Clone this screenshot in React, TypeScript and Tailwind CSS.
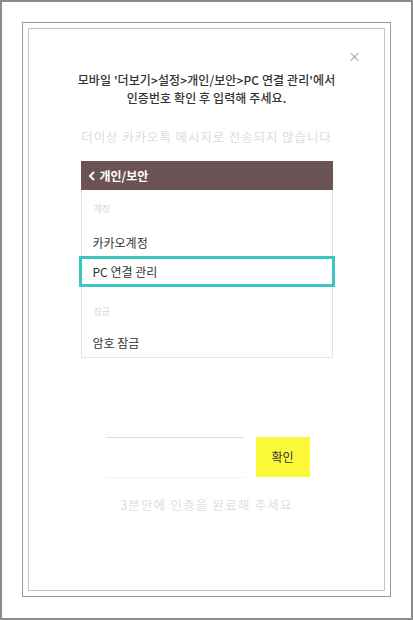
import React from "react";

export default function App() {
  const font = { fontFamily: '"Noto Sans CJK KR", "Noto Sans", sans-serif' };
  return (
    <div
      className="w-[413px] h-[620px] border-2 border-[#8c8c8c] bg-white pt-[20px] px-[20px]"
      style={font}
    >
      <div className="h-[575px] border border-[#9a9a9a] p-[5px]">
        <div className="relative h-full border border-[#c4c4c4] flex flex-col items-center">
          <span className="absolute right-[23px] top-[20px] text-[13px] leading-none text-[#9a9a9a]">
            ×
          </span>
          <div className="mt-[42px] text-center text-[12px] leading-[18px] font-medium text-[#333] tracking-[0.1px]">
            <p>모바일 '더보기&gt;설정&gt;개인/보안&gt;PC 연결 관리'에서</p>
            <p>인증번호 확인 후 입력해 주세요.</p>
          </div>
          <p className="mt-[21px] text-[12.5px] leading-[18px] tracking-[0.9px] text-[#dcdcdc]">
            더이상 카카오톡 메시지로 전송되지 않습니다
          </p>
          <div className="mt-[15px] w-[252px]">
            <div className="h-[29px] bg-[#6b5253] flex items-center pl-[7px] text-white text-[12px] font-bold">
              <svg width="8" height="10" viewBox="0 0 8 10" className="mr-[4px]">
                <path d="M6 1 L2 5 L6 9" stroke="white" strokeWidth="2" fill="none" />
              </svg>
              개인/보안
            </div>
            <div className="border border-t-0 border-[#e4e4e4] flex flex-col">
              <div className="h-[38px] flex items-center pl-[12px] text-[9px] text-[#d8d8d8]">계정</div>
              <div className="h-[28px] flex items-center pt-[2px] pl-[11px] text-[12px] text-[#333]">
                카카오계정
              </div>
              <div className="h-[31px] -mx-[3px] border-[3px] border-[#3cc6c3] flex items-center pl-[11px] text-[12px] text-[#333]">
                PC 연결 관리
              </div>
              <div className="h-[42px] flex items-center pt-[8px] pl-[12px] text-[9px] text-[#d8d8d8]">잠금</div>
              <div className="h-[28px] flex items-center pl-[11px] text-[12px] text-[#333]">암호 잠금</div>
            </div>
          </div>
          <div className="mt-[79px] flex gap-[12px] pl-[2px]">
            <div className="w-[138px] h-[41px] border-t border-b border-t-[#dcdcdc] border-b-[#f2f2f2]" />
            <div className="w-[54px] h-[40px] bg-[#fbf83a] flex items-center justify-center text-[12px] text-[#333]">
              확인
            </div>
          </div>
          <p className="mt-[19px] text-[12.5px] leading-[16px] tracking-[1.2px] text-[#dedede]">
            3분안에 인증을 완료해 주세요
          </p>
        </div>
      </div>
    </div>
  );
}
